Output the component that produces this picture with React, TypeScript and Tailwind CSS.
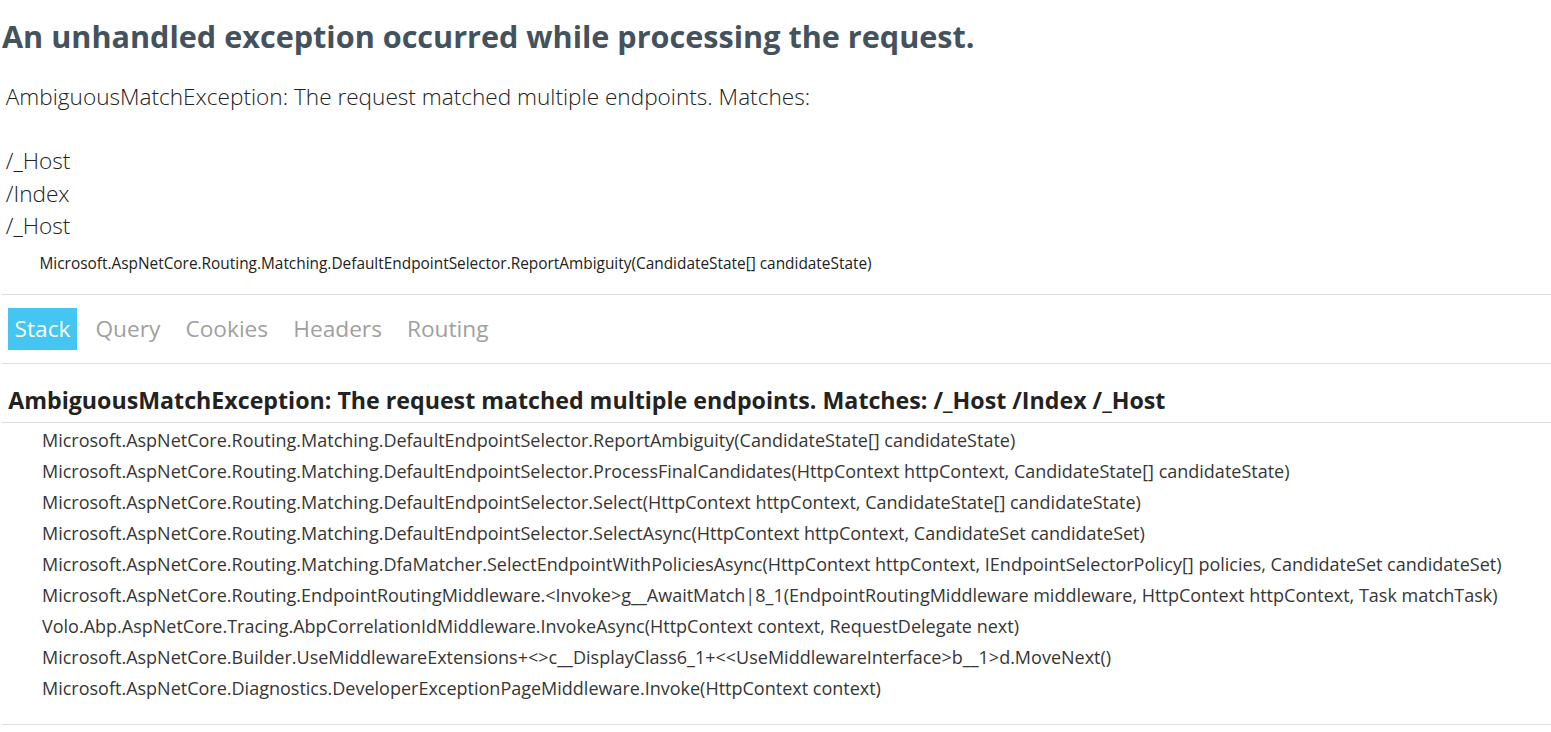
import React from 'react';

const frames = [
  'Microsoft.AspNetCore.Routing.Matching.DefaultEndpointSelector.ReportAmbiguity(CandidateState[] candidateState)',
  'Microsoft.AspNetCore.Routing.Matching.DefaultEndpointSelector.ProcessFinalCandidates(HttpContext httpContext, CandidateState[] candidateState)',
  'Microsoft.AspNetCore.Routing.Matching.DefaultEndpointSelector.Select(HttpContext httpContext, CandidateState[] candidateState)',
  'Microsoft.AspNetCore.Routing.Matching.DefaultEndpointSelector.SelectAsync(HttpContext httpContext, CandidateSet candidateSet)',
  'Microsoft.AspNetCore.Routing.Matching.DfaMatcher.SelectEndpointWithPoliciesAsync(HttpContext httpContext, IEndpointSelectorPolicy[] policies, CandidateSet candidateSet)',
  'Microsoft.AspNetCore.Routing.EndpointRoutingMiddleware.<Invoke>g__AwaitMatch|8_1(EndpointRoutingMiddleware middleware, HttpContext httpContext, Task matchTask)',
  'Volo.Abp.AspNetCore.Tracing.AbpCorrelationIdMiddleware.InvokeAsync(HttpContext context, RequestDelegate next)',
  'Microsoft.AspNetCore.Builder.UseMiddlewareExtensions+<>c__DisplayClass6_1+<<UseMiddlewareInterface>b__1>d.MoveNext()',
  'Microsoft.AspNetCore.Diagnostics.DeveloperExceptionPageMiddleware.Invoke(HttpContext context)',
];

const tabs = ['Stack', 'Query', 'Cookies', 'Headers', 'Routing'];

export default function App() {
  return (
    <div className="min-h-screen bg-white pl-[2px] font-['Open_Sans',sans-serif] text-[15.4px] text-[#222]">
      <h1 className="pt-[15px] text-[30.6px] font-bold leading-[43px] text-[#44525e]">
        An unhandled exception occurred while processing the request.
      </h1>

      <div className="mt-[23px] whitespace-pre-wrap px-[3.75px] text-[22.6px] font-light leading-[32.2px] text-[#222]">
        {'AmbiguousMatchException: The request matched multiple endpoints. Matches:\n\n/_Host\n/Index\n/_Host'}
      </div>
      <p className="ml-[37.5px] mt-[11px] leading-[22px]">
        Microsoft.AspNetCore.Routing.Matching.DefaultEndpointSelector.ReportAmbiguity(CandidateState[] candidateState)
      </p>

      <ul className="mt-[19px] flex border-y border-[#ddd] py-[13px] text-[22.7px]">
        {tabs.map((t, i) => (
          <li
            key={t}
            className={
              i === 0
                ? 'mx-[6.25px] bg-[#44c5f2] px-[6.25px] py-[6px] leading-[30px] text-white'
                : 'mx-[6.25px] px-[6.25px] py-[6px] leading-[30px] text-[#a0a0a0]'
            }
          >
            {t}
          </li>
        ))}
      </ul>

      <div>
        <h2 className="mt-[21px] border-b border-[#ddd] px-[6.25px] pb-[6px] text-[23.2px] font-bold leading-[31px] text-[#222]">
          AmbiguousMatchException: The request matched multiple endpoints. Matches: /_Host /Index /_Host
        </h2>
        <ul className="pt-[1.5px]">
          {frames.map((f, i) => (
            <li key={i} className="ml-[37.5px]">
              <h3 className="p-[2.5px] text-[18px] leading-[26px] text-[#363636]">{f}</h3>
            </li>
          ))}
        </ul>
        <div className="mt-[20px] border-b border-[#ddd]" />
      </div>
    </div>
  );
}
